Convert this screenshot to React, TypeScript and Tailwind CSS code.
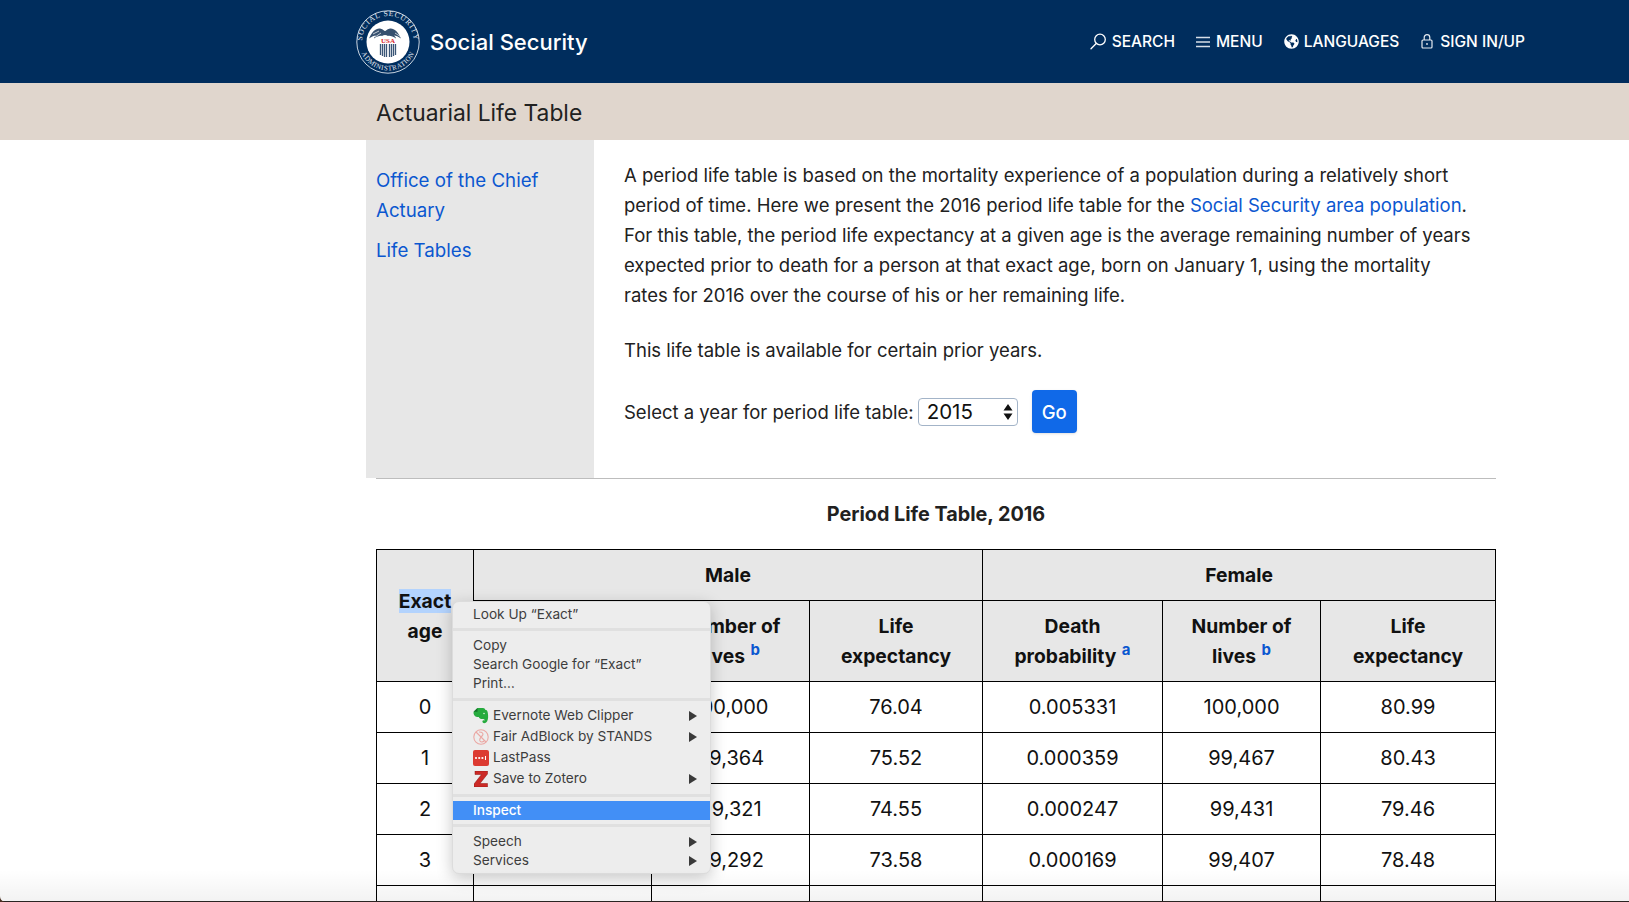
import { FaGlobeAmericas } from "react-icons/fa";

const font = { fontFamily: "Inter, 'Liberation Sans', sans-serif" };

function Logo() {
  return (
    <svg width="64" height="64" viewBox="0 0 64 64" className="shrink-0">
      <defs>
        <path id="topArc" d="M6 32a26 26 0 0 1 52 0" />
        <path id="botArc" d="M3.500 32a28.500 28.500 0 0 0 57 0" />
      </defs>
      <circle cx="32" cy="32" r="31.200" fill="none" stroke="#dfe6ee" strokeWidth="0.900" />
      <circle cx="32" cy="32" r="21.500" fill="#fff" />
      <text fontSize="7.600" fill="#e4eaf1" fontFamily="'Liberation Serif', serif" letterSpacing="0.800">
        <textPath href="#topArc" startOffset="50%" textAnchor="middle">SOCIAL SECURITY</textPath>
      </text>
      <text fontSize="7" fill="#e4eaf1" fontFamily="'Liberation Serif', serif" letterSpacing="0.500">
        <textPath href="#botArc" startOffset="50%" textAnchor="middle">ADMINISTRATION</textPath>
      </text>
      <path d="M32 24c-2-2-5-5-8-5.500-4-.5-8 3-11 10 3-2 5-3 7-3-1 1-2 2-2 3 3-2 6-3 8-2.500 2-1.500 4-1.500 6 0 2-.5 5 .5 8 2.500 0-1-1-2-2-3 2 0 4 1 7 3-3-7-7-10.500-11-10-3 .5-6 3.500-8 5.500z" fill="#36506f" />
      <path d="M17 24l6-3M19 27l6-4M47 24l-6-3M45 27l-6-4" stroke="#fff" strokeWidth="0.700" />
      <text x="32" y="33" textAnchor="middle" fontSize="7" fontWeight="700" fill="#d8262c" fontFamily="'Liberation Serif', serif">USA</text>
      <path d="M24.500 34v11M26.500 34v12M28.500 34v13M30.500 34v13M33.500 34v13M35.500 34v13M37.500 34v12M39.500 34v11" stroke="#3b5676" strokeWidth="1.300" />
    </svg>
  );
}

function NavItem({ icon, label, gap }: { icon: React.ReactNode; label: string; gap: string }) {
  return (
    <div className={`flex items-center ${gap}`}>
      {icon}
      <span className="text-[15.500px] font-medium leading-6 text-white">{label}</span>
    </div>
  );
}

function Header() {
  return (
    <header className="h-[83px] bg-[#002d5d] pl-[356px] flex items-center">
      <Logo />
      <span className="ml-[10px] text-[22px] font-medium leading-8 text-white">Social Security</span>
      <nav className="flex items-center gap-[21px] ml-[502px]">
        <NavItem
          gap="gap-[6px]"
          label="SEARCH"
          icon={
            <svg width="16" height="17" viewBox="0 0 16 17" fill="none" stroke="#fff" strokeWidth="1.300">
              <circle cx="10" cy="6.500" r="5.300" />
              <path d="M6.200 10.500L1 15.800" strokeLinecap="round" />
            </svg>
          }
        />
        <NavItem
          gap="gap-[6px]"
          label="MENU"
          icon={
            <svg width="14" height="12" viewBox="0 0 14 12" stroke="#d6dee8" strokeWidth="1.300">
              <path d="M0 1.500h14M0 6h14M0 10.500h14" />
            </svg>
          }
        />
        <NavItem gap="gap-[5px]" label="LANGUAGES" icon={<FaGlobeAmericas className="text-white text-[15px]" />} />
        <NavItem
          gap="gap-[7px]"
          label="SIGN IN/UP"
          icon={
            <svg width="12" height="15" viewBox="0 0 12 15" fill="none" stroke="#e6ebf1" strokeWidth="1.200" className="ml-[1px]">
              <rect x="1" y="6" width="10" height="8" rx="1" />
              <path d="M3.200 6V3.500a2.800 2.800 0 0 1 5.600 0V6" />
              <circle cx="6" cy="10" r="0.900" fill="#e6ebf1" stroke="none" />
            </svg>
          }
        />
      </nav>
    </header>
  );
}

function Sidebar() {
  return (
    <aside className="w-[228px] h-[338px] shrink-0 bg-[#e7e7e7] pl-[10px] pr-[20px] pt-[26px] text-[18.700px] leading-[30px] text-[#0b57d0]">
      <div>Office of the Chief Actuary</div>
      <div className="mt-[10px]">Life Tables</div>
    </aside>
  );
}

function Intro() {
  return (
    <div className="flex-1 pl-[30px] pr-[20px] pt-[20px] text-[18.500px] leading-[30px] text-[#212121]">
      <p>
        A period life table is based on the mortality experience of a population during a relatively short period of
        time. Here we present the 2016 period life table for the{" "}
        <span className="text-[#0b57d0]">Social Security area population</span>. For this table, the period life
        expectancy at a given age is the average remaining number of years expected prior to death for a person at that
        exact age, born on January 1, using the mortality rates for 2016 over the course of his or her remaining life.
      </p>
      <p className="mt-[25px]">This life table is available for certain prior years.</p>
      <div className="mt-[25px] flex items-center">
        <span>Select a year for period life table:</span>
        <div className="relative ml-[4px] w-[100px] h-[28px] rounded-[4px] border border-[#a3b4c8] bg-white flex items-center pl-[8px] text-[20.500px] text-[#111]">
          2015
          <svg width="10" height="20" viewBox="0 0 10 20" className="absolute right-[4px] top-[3px]" fill="#111">
            <path d="M5 2l4.500 6.500H.5zM5 18l4.500-6.500H.5z" />
          </svg>
        </div>
        <button className="ml-[14px] w-[45px] h-[43px] rounded-[4px] bg-[#1069e8] text-white font-medium shadow-sm">Go</button>
      </div>
    </div>
  );
}

const Sup = ({ c }: { c: string }) => (
  <sup className="text-[15px] font-bold text-[#0b57d0] ml-[1px] leading-none align-[1px]">{c}</sup>
);

const thCls = "border border-black bg-[#e7e7e7] font-bold align-middle text-center text-[#111] px-1 text-[19.300px]";
const tdCls = "border border-black text-center text-[#111] p-0 text-[20px]";

const rows = [
  ["0", "", "100,000", "76.04", "0.005331", "100,000", "80.99"],
  ["1", "", "99,364", "75.52", "0.000359", "99,467", "80.43"],
  ["2", "", "99,321", "74.55", "0.000247", "99,431", "79.46"],
  ["3", "", "99,292", "73.58", "0.000169", "99,407", "78.48"],
  ["", "", "", "", "", "", ""],
];

function LifeTable() {
  return (
    <table className="w-[1119px] table-fixed border-collapse leading-[30px]">
      <colgroup>
        <col className="w-[97px]" />
        <col className="w-[178px]" />
        <col className="w-[158px]" />
        <col className="w-[173px]" />
        <col className="w-[180px]" />
        <col className="w-[158px]" />
        <col className="w-[175px]" />
      </colgroup>
      <thead>
        <tr className="h-[51px]">
          <th rowSpan={2} className={thCls}>
            <span className="bg-[#b3d3fd]">Exact</span>
            <br />
            age
          </th>
          <th colSpan={3} className={thCls}>Male</th>
          <th colSpan={3} className={thCls}>Female</th>
        </tr>
        <tr className="h-[81px]">
          <th className={thCls}>Death<br />probability <Sup c="a" /></th>
          <th className={thCls}>Number of<br />lives <Sup c="b" /></th>
          <th className={thCls}>Life<br />expectancy</th>
          <th className={thCls}>Death<br />probability <Sup c="a" /></th>
          <th className={thCls}>Number of<br />lives <Sup c="b" /></th>
          <th className={thCls}>Life<br />expectancy</th>
        </tr>
      </thead>
      <tbody>
        {rows.map((r, i) => (
          <tr key={i} className="h-[51px]">
            {r.map((c, j) => (
              <td key={j} className={tdCls}>{c}</td>
            ))}
          </tr>
        ))}
      </tbody>
    </table>
  );
}

const Arrow = () => (
  <svg width="8" height="10" viewBox="0 0 8 10" className="absolute right-[13px] top-1/2 -translate-y-1/2" fill="#3a3a3a">
    <path d="M0 0l8 5-8 5z" />
  </svg>
);

function Item({ label, h = "h-[19px]", icon, arrow }: { label: string; h?: string; icon?: React.ReactNode; arrow?: boolean }) {
  return (
    <div className={`relative flex items-center pl-[20px] ${h}`}>
      {icon && <span className="w-[20px] shrink-0 flex items-center">{icon}</span>}
      <span>{label}</span>
      {arrow && <Arrow />}
    </div>
  );
}

const Evernote = () => (
  <svg width="16" height="17" viewBox="0 0 16 17">
    <path d="M4.500 1h5.500c1.500 0 2 1 2.200 1.800 1.500.2 2.300 1 2.600 3 .6 3.700.4 6.500-.6 8.500-1 1.800-3.200 2.300-4.200 1.500-1-.8-.7-2.600.5-2.600l1.200.4c.2-1.100-1.200-1.500-2.700-1.500-1.500 0-2.700-.7-3.200-2.100C4 10 2 9.500 1.500 8.500.6 7.500.4 6 .6 4.800z" fill="#26ab3e" />
    <path d="M4.500 1v3.800H.6z" fill="#15702a" />
    <circle cx="11" cy="6.500" r="0.800" fill="#d8f2dc" />
  </svg>
);

const Fair = () => (
  <svg width="16" height="16" viewBox="0 0 16 16" fill="none" stroke="#eba8a4" strokeWidth="1.100">
    <circle cx="8" cy="8" r="7.200" />
    <path d="M3 3l10 10M6 3c4 0 5 2 3 4S6 10 7 12c1 1.500 3 1 4 0" />
  </svg>
);

const LastPass = () => (
  <svg width="16" height="16" viewBox="0 0 16 16">
    <rect width="16" height="16" rx="2" fill="#dc3a31" />
    <circle cx="3" cy="8" r="1.100" fill="#fff" />
    <circle cx="6.200" cy="8" r="1.100" fill="#fff" />
    <circle cx="9.400" cy="8" r="1.100" fill="#fff" />
    <rect x="12" y="6" width="1" height="4" fill="#fff" />
  </svg>
);

const Zotero = () => (
  <svg width="14" height="16" viewBox="0 0 14 16" className="ml-[1px]">
    <path d="M1 0h12.500v3L6 12.500h7.500V16H0v-3L7.500 3.500H1z" fill="#cc2a26" stroke="#8f1512" strokeWidth="0.500" />
  </svg>
);

function ContextMenu() {
  return (
    <div className="absolute left-[452px] top-[601px] w-[259px] h-[273px] rounded-[7px] bg-[#ededed] pt-[3px] text-[13.650px] leading-[19px] text-[#3d3d3d] shadow-[0_4px_16px_rgba(0,0,0,0.22)] border border-[#dcdcdc] overflow-hidden">
      <Item label="Look Up “Exact”" />
      <div className="h-[3px] bg-[#e0e0e0] mt-[4px] mb-[5px]" />
      <Item label="Copy" />
      <Item label="Search Google for “Exact”" />
      <Item label="Print…" />
      <div className="h-[3px] bg-[#e0e0e0] mt-[5px] mb-[4px]" />
      <Item label="Evernote Web Clipper" h="h-[21px]" icon={<Evernote />} arrow />
      <Item label="Fair AdBlock by STANDS" h="h-[21px]" icon={<Fair />} arrow />
      <Item label="LastPass" h="h-[21px]" icon={<LastPass />} />
      <Item label="Save to Zotero" h="h-[21px]" icon={<Zotero />} arrow />
      <div className="h-[3px] bg-[#e0e0e0] mt-[5px] mb-[4px]" />
      <div className="h-[19px] bg-[#428ff6] text-white font-medium flex items-center pl-[20px]">Inspect</div>
      <div className="h-[3px] bg-[#e0e0e0] mt-[4px] mb-[5px]" />
      <Item label="Speech" arrow />
      <Item label="Services" arrow />
    </div>
  );
}

export default function App() {
  return (
    <div style={font} className="relative h-[902px] overflow-hidden bg-white">
      <Header />
      <div className="h-[57px] bg-[#e0d6cd] pl-[376px] pt-[3px] flex items-center text-[22.800px] text-[#212121]">
        Actuarial Life Table
      </div>
      <div className="ml-[366px] w-[1130px]">
        <div className="flex h-[338px]">
          <Sidebar />
          <Intro />
        </div>
        <div className="ml-[10px] h-px bg-[#bdbdbd]" />
        <div className="ml-[10px] pt-[20px] pb-[20px] text-center text-[19.800px] leading-[30px] font-bold text-[#212121]">
          Period Life Table, 2016
        </div>
        <div className="ml-[10px]">
          <LifeTable />
        </div>
      </div>
      <ContextMenu />
      <div className="absolute inset-x-0 bottom-0 h-[32px] bg-gradient-to-b from-transparent to-black/5 pointer-events-none" />
      <div className="absolute inset-x-0 bottom-0 h-[1px] bg-[#2a2422]" />
      <svg width="6" height="6" viewBox="0 0 6 6" className="absolute left-0 bottom-0">
        <path d="M0 0C0 3.500 2.500 6 6 6H0z" fill="#4a2f22" />
      </svg>
    </div>
  );
}
